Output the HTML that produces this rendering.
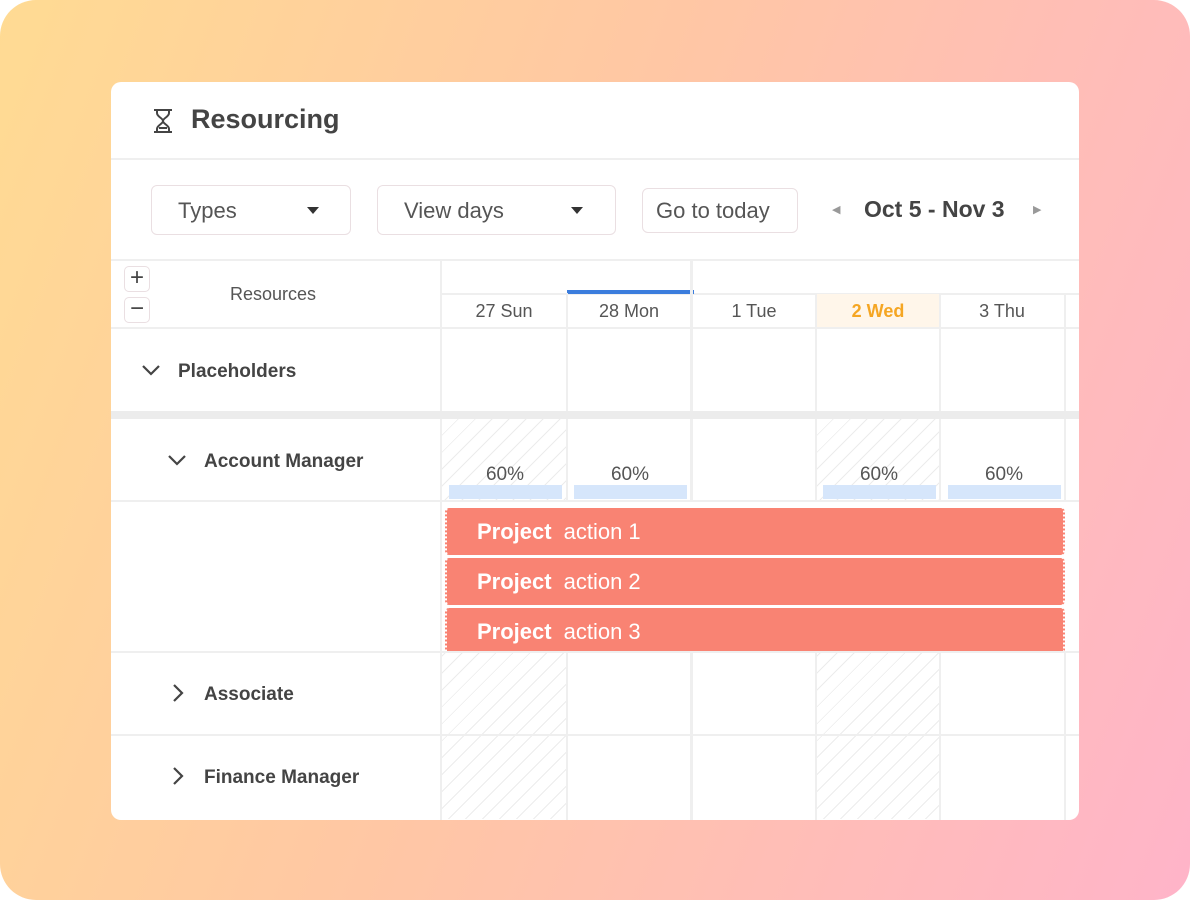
<!DOCTYPE html>
<html><head><meta charset="utf-8"><style>
*{margin:0;padding:0;box-sizing:border-box}
body{width:1190px;height:900px;overflow:hidden;background:#fff;font-family:"Liberation Sans",sans-serif;color:#444}
.bg{position:absolute;left:0;top:0;width:1190px;height:900px;border-radius:36px;background:linear-gradient(110deg,#ffdb93 0%,#ffc7a4 45%,#ffb4c9 100%)}
.card{position:absolute;left:111px;top:82px;width:968px;height:738px;background:#fff;border-radius:10px;overflow:hidden}
.a{position:absolute}
.hl{position:absolute;height:2px;background:#efefef}
.vl{position:absolute;width:2px;background:#efefef}
.btn{position:absolute;border:1.5px solid #eadfe2;border-radius:6px;font-size:22px;color:#555}
.hatch{position:absolute;background:repeating-linear-gradient(135deg,#fff 0 11px,#ececec 11px 12px)}
.lab{position:absolute;font-size:19px;font-weight:bold;color:#444}
.day{position:absolute;top:212px;height:34px;width:124px;text-align:center;font-size:18px;line-height:34px;color:#555}
.pct{position:absolute;top:382px;font-size:19px;color:#555;width:124px;text-align:center}
.bar{position:absolute;top:403px;height:14px;width:113px;background:#d6e6fb}
.proj{position:absolute;left:334px;width:620px;height:47px;background:#f98373;border-radius:4px;color:#fff;font-size:22px;line-height:47px;padding-left:30px;border-left:2px dotted #fff;border-right:2px dotted #fff}
.proj b{margin-right:12px}
.tri{position:absolute;width:0;height:0;border-left:6px solid transparent;border-right:6px solid transparent;border-top:7px solid #333}
</style></head><body>
<div class="bg"></div>
<div class="card">
 <svg class="a" style="left:41px;top:26px" width="22" height="26" viewBox="0 0 22 26"><path d="M2 2h18M2 24h18M5 2v3c0 4 6 5 6 8s-6 4-6 8v3M17 2v3c0 4-6 5-6 8s6 4 6 8v3" fill="none" stroke="#444" stroke-width="2"/><path d="M7 20h8" stroke="#444" stroke-width="2"/></svg>
 <div class="a" style="left:80px;top:22px;font-size:27px;font-weight:bold;color:#444">Resourcing</div>
 <div class="hl" style="left:0;top:76px;width:968px"></div>
 <div class="btn" style="left:40px;top:103px;width:200px;height:50px"><span class="a" style="left:26px;top:12px">Types</span><span class="tri" style="left:155px;top:21px"></span></div>
 <div class="btn" style="left:266px;top:103px;width:239px;height:50px"><span class="a" style="left:26px;top:12px">View days</span><span class="tri" style="left:193px;top:21px"></span></div>
 <div class="btn" style="left:531px;top:106px;width:156px;height:45px"><span class="a" style="left:13px;top:9px">Go to today</span></div>
 <div class="a" style="left:721px;top:121px;font-size:11px;color:#999">◀</div>
 <div class="a" style="left:753px;top:114px;font-size:23px;font-weight:bold;color:#444">Oct 5 - Nov 3</div>
 <div class="a" style="left:922px;top:121px;font-size:11px;color:#999">▶</div>
 <div class="hl" style="left:0;top:177px;width:968px"></div>
 <div class="hatch" style="left:331px;top:337px;width:124px;height:400px"></div>
 <div class="hatch" style="left:706px;top:337px;width:123px;height:400px"></div>
 <div class="btn" style="left:13px;top:184px;width:26px;height:26px;border-radius:5px;font-size:24px;line-height:22px;text-align:center;color:#444">+</div>
 <div class="btn" style="left:13px;top:215px;width:26px;height:26px;border-radius:5px;font-size:24px;line-height:22px;text-align:center;color:#444">−</div>
 <div class="a" style="left:119px;top:202px;font-size:18px;color:#555">Resources</div>
 <div class="hl" style="left:330px;top:211px;width:638px"></div>
 <div class="a" style="left:456px;top:208px;width:127px;height:4px;background:#3b7ddd"></div>
 <div class="a" style="left:706px;top:212px;width:123px;height:34px;background:#fff6ea"></div>
 <div class="day" style="left:331px">27 Sun</div>
 <div class="day" style="left:456px">28 Mon</div>
 <div class="day" style="left:581px">1 Tue</div>
 <div class="day" style="left:705px;color:#f5a623;font-weight:bold">2 Wed</div>
 <div class="day" style="left:829px">3 Thu</div>
 <div class="hl" style="left:0;top:245px;width:968px"></div>
 <div class="vl" style="left:329px;top:178px;height:560px"></div>
 <div class="vl" style="left:455px;top:211px;height:527px"></div>
 <div class="vl" style="left:579px;top:178px;height:560px;width:3px"></div>
 <div class="vl" style="left:704px;top:211px;height:527px"></div>
 <div class="vl" style="left:828px;top:211px;height:527px"></div>
 <div class="vl" style="left:953px;top:211px;height:527px"></div>
 <svg class="a" style="left:30px;top:281px" width="20" height="14"><path d="M2 3l8 8 8-8" fill="none" stroke="#444" stroke-width="2.2"/></svg>
 <div class="lab" style="left:67px;top:279px">Placeholders</div>
 <div class="a" style="left:0;top:329px;width:968px;height:8px;background:#ececec"></div>
 <svg class="a" style="left:56px;top:371px" width="20" height="14"><path d="M2 3l8 8 8-8" fill="none" stroke="#444" stroke-width="2.2"/></svg>
 <div class="lab" style="left:93px;top:369px">Account Manager</div>
 <div class="pct" style="left:332px">60%</div><div class="bar" style="left:338px"></div>
 <div class="pct" style="left:457px">60%</div><div class="bar" style="left:463px"></div>
 <div class="pct" style="left:706px">60%</div><div class="bar" style="left:712px"></div>
 <div class="pct" style="left:831px">60%</div><div class="bar" style="left:837px"></div>
 <div class="hl" style="left:0;top:418px;width:968px"></div>
 <div class="a" style="left:331px;top:420px;width:637px;height:150px;background:#fff"></div>
 <div class="proj" style="top:426px"><b>Project</b>action 1</div>
 <div class="proj" style="top:476px"><b>Project</b>action 2</div>
 <div class="proj" style="top:526px;height:44px;border-radius:4px 4px 0 0"><b>Project</b>action 3</div>
 <div class="hl" style="left:0;top:569px;width:968px"></div>
 <svg class="a" style="left:60px;top:601px" width="14" height="20"><path d="M3 2l8 8-8 8" fill="none" stroke="#444" stroke-width="2.2"/></svg>
 <div class="lab" style="left:93px;top:602px">Associate</div>
 <div class="hl" style="left:0;top:652px;width:968px"></div>
 <svg class="a" style="left:60px;top:684px" width="14" height="20"><path d="M3 2l8 8-8 8" fill="none" stroke="#444" stroke-width="2.2"/></svg>
 <div class="lab" style="left:93px;top:685px">Finance Manager</div>
</div>
</body></html>
